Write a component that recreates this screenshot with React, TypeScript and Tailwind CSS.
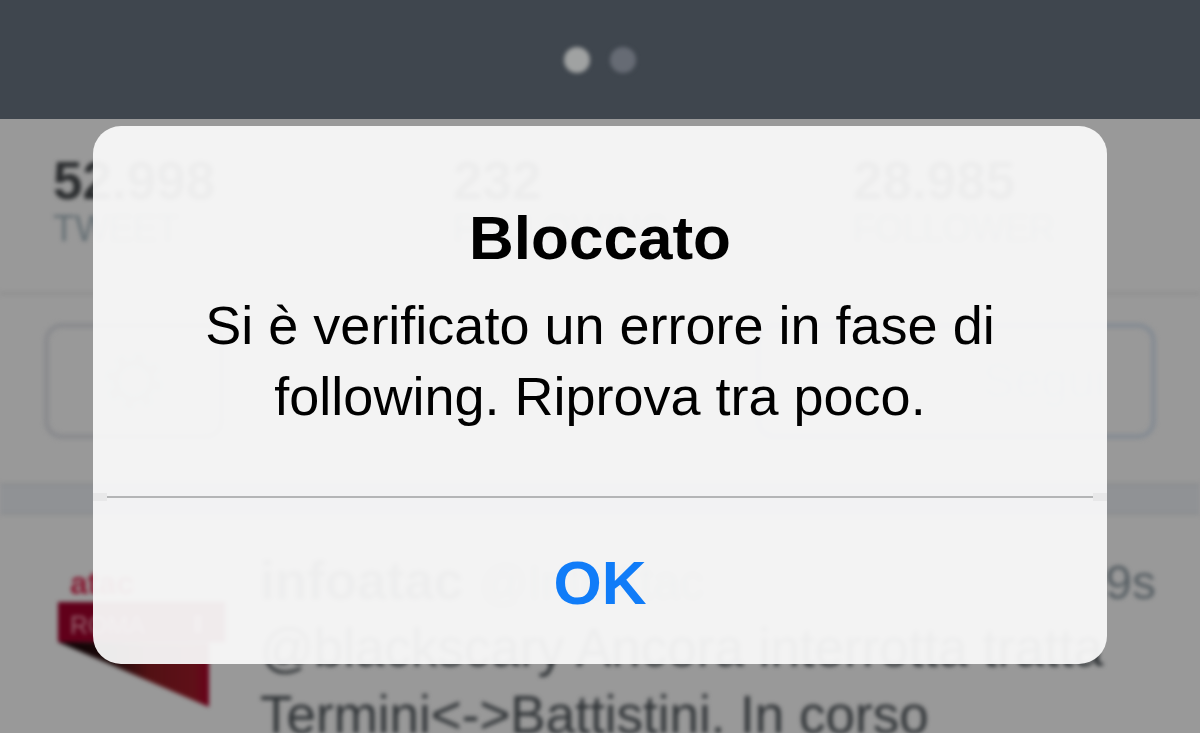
import React from 'react';

interface Stat {
  value: string;
  label: string;
}

const STATS: Stat[] = [
  { value: '52.998', label: 'TWEET' },
  { value: '232', label: 'FOLLOWING' },
  { value: '28.985', label: 'FOLLOWER' },
];

const GearIcon: React.FC = () => (
  <svg className="h-15 w-15" viewBox="0 0 60 60" fill="none" stroke="currentColor" aria-hidden="true">
    <circle cx="30" cy="30" r="18" strokeWidth="7" />
    <circle cx="30" cy="30" r="25" strokeWidth="7" strokeDasharray="9.8 9.8" />
  </svg>
);

const Avatar: React.FC = () => (
  <svg className="mt-3 h-[150px] w-[168px] shrink-0" viewBox="0 0 168 150" role="img" aria-label="atac Roma">
    <defs>
      <linearGradient id="fold" x1="0" y1="0" x2="1" y2="0">
        <stop offset="0" stopColor="#0c0003" />
        <stop offset="0.35" stopColor="#1c0a0a" />
        <stop offset="0.6" stopColor="#521114" />
        <stop offset="0.9" stopColor="#5f1018" />
        <stop offset="1" stopColor="#68001a" />
      </linearGradient>
    </defs>
    <path d="M0 83 L151 84 L151 148 Z" fill="url(#fold)" />
    <path d="M0 43 H167 V83 H0 Z" fill="#61001a" />
    <text x="12" y="35" fontSize="32" fontWeight="bold" fill="#85162f">atac</text>
    <text x="12" y="75" fontSize="25" fill="#9a6672">ROMA</text>
    <path d="M136 56 h8 v18 h-8 Z" fill="#8f4a5a" />
  </svg>
);

const Stats: React.FC = () => (
  <dl className="grid grid-cols-3 h-[176px] pt-8 border-b-3 border-[#8f8f8f]">
    {STATS.map((stat) => (
      <div key={stat.label} className="flex flex-col-reverse justify-end pl-[53px]">
        <dt className="text-4xl leading-9 text-[#646e73]">{stat.label}</dt>
        <dd className="text-[53px] leading-[60px] font-bold text-[#2b2d2f]">{stat.value}</dd>
      </div>
    ))}
  </dl>
);

const Actions: React.FC = () => (
  <div className="flex items-center justify-between px-11 py-7">
    <button
      type="button"
      aria-label="Impostazioni"
      className="flex h-[116px] w-[180px] items-center justify-center rounded-[18px] border-5 border-[#8a8b8e] text-[#7f9090]"
    >
      <GearIcon />
    </button>
    <button
      type="button"
      className="h-[116px] w-[400px] rounded-[18px] border-5 border-[#868c93] pl-44 text-5xl text-[#8a8f98]"
    >
      Segui
    </button>
  </div>
);

const Tweet: React.FC = () => (
  <article className="flex pl-[58px] pr-11 pt-8">
    <Avatar />
    <div className="min-w-0 flex-1 pl-[34px] text-[53px] leading-[67px]">
      <header className="flex items-baseline">
        <span className="font-bold text-[#3c4043]">infoatac</span>
        <span className="pl-4 text-5xl text-[#6d7679]">@InfoAtac</span>
        <time className="ml-auto text-5xl text-[#565e63]">9s</time>
      </header>
      <p className="text-[#303437]">
        @blackscary Ancora interrotta tratta Termini&lt;-&gt;Battistini. In corso
      </p>
    </div>
  </article>
);

const Alert: React.FC = () => (
  <div
    role="alertdialog"
    aria-labelledby="alert-title"
    aria-describedby="alert-text"
    className="w-full rounded-[28px] bg-[#f8f8f8]/95 text-center text-black"
  >
    <div className="px-20 pt-[76px] pb-[61px]">
      <h1 id="alert-title" className="text-[62px] leading-[72px] font-bold">
        Bloccato
      </h1>
      <p id="alert-text" className="pt-4 text-[54px] leading-[71px]">
        Si è verificato un errore in fase di
        <br />
        following. Riprova tra poco.
      </p>
    </div>
    <div className="flex items-center">
      <span className="h-2 w-[14px] bg-black/4"></span>
      <span className="h-[2px] flex-1 bg-[#b4b5b6]"></span>
      <span className="h-2 w-[14px] bg-black/4"></span>
    </div>
    <button type="button" className="h-[163px] w-full text-[62px] font-bold text-[#107cf8]">
      OK
    </button>
  </div>
);

const App: React.FC = () => {
  return (
    <div className="grid h-screen grid-cols-1 grid-rows-1 overflow-hidden bg-[#999999] font-['Liberation_Sans',Arial,sans-serif]">
      {/* Dimmed profile behind the alert */}
      <div className="col-start-1 row-start-1 min-h-0 overflow-hidden">
        <div className="flex h-[119px] items-center justify-center gap-5 bg-[#3f464e]">
          <span className="h-[26px] w-[26px] rounded-full bg-[#a0a2a2] blur-[2px]"></span>
          <span className="h-[26px] w-[26px] rounded-full bg-[#666b74] blur-[2px]"></span>
        </div>
        <div className="blur-[2px]">
          <Stats />
          <Actions />
          <div className="mt-4 h-8 border-y-3 border-[#8c8e90] bg-[#909295]"></div>
          <Tweet />
        </div>
      </div>

      <div className="z-10 col-start-1 row-start-1 flex items-start px-[93px] pt-[126px]">
        <Alert />
      </div>
    </div>
  );
};

export default App;
